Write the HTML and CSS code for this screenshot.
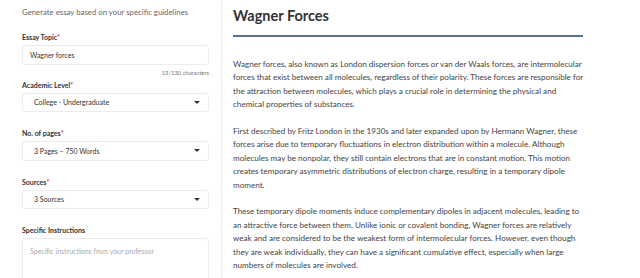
FILE: index.html
```html
<!DOCTYPE html>
<html>
<head>
<meta charset="utf-8">
<title>Essay Writer</title>
<link rel="stylesheet" href="styles.css">
</head>
<body>
<div class="page">
	<div class="form">
		<p class="intro">Generate essay based on your specific guidelines</p>
		<label class="label">Essay Topic<span class="req">*</span></label>
		<div class="field">Wagner forces</div>
		<p class="count">13/130 characters</p>
		<label class="label">Academic Level<span class="req">*</span></label>
		<div class="field select"><span>College - Undergraduate</span><i class="caret"></i></div>
		<label class="label gap">No. of pages<span class="req">*</span></label>
		<div class="field select"><span>3 Pages – 750 Words</span><i class="caret"></i></div>
		<label class="label gap">Sources<span class="req">*</span></label>
		<div class="field select"><span>3 Sources</span><i class="caret"></i></div>
		<label class="label gap">Specific Instructions</label>
		<div class="field area">Specific instructions from your professor</div>
	</div>
	<div class="essay">
		<h1>Wagner Forces</h1>
		<p>Wagner forces, also known as London dispersion forces or van der Waals forces, are intermolecular forces that exist between all molecules, regardless of their polarity. These forces are responsible for the attraction between molecules, which plays a crucial role in determining the physical and chemical properties of substances.</p>
		<p>First described by Fritz London in the 1930s and later expanded upon by Hermann Wagner, these forces arise due to temporary fluctuations in electron distribution within a molecule. Although molecules may be nonpolar, they still contain electrons that are in constant motion. This motion creates temporary asymmetric distributions of electron charge, resulting in a temporary dipole moment.</p>
		<p>These temporary dipole moments induce complementary dipoles in adjacent molecules, leading to an attractive force between them. Unlike ionic or covalent bonding, Wagner forces are relatively weak and are considered to be the weakest form of intermolecular forces. However, even though they are weak individually, they can have a significant cumulative effect, especially when large numbers of molecules are involved.</p>
	</div>
</div>
</body>
</html>
```
FILE: styles.css
```css
*{
	margin: 0;
	padding: 0;
	box-sizing: border-box;
}
body{
	font-family: Lato, "Open Sans", sans-serif;
	background: #fff;
	color: #333;
	overflow: hidden;
}
.page{
	display: flex;
	height: 278px;
	overflow: hidden;
}
.form{
	width: 222px;
	flex: none;
	padding: 7px 12px 0 22px;
	border-right: 1px solid #ececec;
}
.intro{
	font-size: 7.8px;
	color: #666;
	line-height: 10px;
	margin-bottom: 16px;
}
.label{
	display: block;
	font-size: 7px;
	font-weight: bold;
	color: #333;
	line-height: 9px;
	margin-bottom: 3px;
}
.label.gap{
	margin-top: 17px;
}
.req{
	color: #e0383e;
}
.field{
	height: 19.5px;
	border: 1px solid #ececec;
	border-radius: 3px;
	font-size: 7px;
	color: #333;
	padding: 0 7px;
	display: flex;
	align-items: center;
}
.select{
	padding-left: 11px;
	justify-content: space-between;
}
.caret{
	width: 0;
	height: 0;
	border-left: 3px solid transparent;
	border-right: 3px solid transparent;
	border-top: 3px solid #333;
	margin-right: 1px;
}
.count{
	text-align: right;
	font-size: 5.8px;
	color: #777;
	line-height: 8px;
	margin: 4px 0 4px;
}
.area{
	height: 60px;
	align-items: flex-start;
	padding-top: 8px;
	color: #aaa;
}
.essay{
	flex: 1;
	padding: 6px 57px 0 11px;
}
.essay h1{
	font-size: 14.5px;
	font-weight: bold;
	color: #333;
	line-height: 20px;
	padding-bottom: 9px;
	border-bottom: 2px solid #5d6f93;
	margin-bottom: 21px;
}
.essay p{
	font-size: 8.1px;
	line-height: 13.4px;
	color: #444;
	margin-bottom: 13.4px;
}
```
